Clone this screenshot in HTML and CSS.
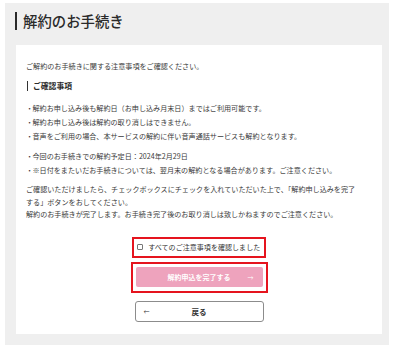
FILE: index.html
```html
<!DOCTYPE html>
<html lang="ja">
<head>
    <meta charset="utf-8">
    <meta name="viewport" content="width=device-width, initial-scale=1.0">
    <title>解約のお手続き</title>
    <link rel="stylesheet" href="styles.css">
</head>
<body>
    <div class="side">
        <h1 class="titel">解約のお手続き</h1>

        <section class="kort">
            <p class="intro">ご解約のお手続きに関する注意事項をご確認ください。</p>

            <h2 class="underTitel">ご確認事項</h2>

            <ul class="liste">
                <li>解約お申し込み後も解約日（お申し込み月末日）まではご利用可能です。</li>
                <li>解約お申し込み後は解約の取り消しはできません。</li>
                <li>音声をご利用の場合、本サービスの解約に伴い音声通話サービスも解約となります。</li>
            </ul>

            <ul class="liste">
                <li>今回のお手続きでの解約予定日：2024年2月29日</li>
                <li>※日付をまたいだお手続きについては、翌月末の解約となる場合があります。ご注意ください。</li>
            </ul>

            <p class="tekst">ご確認いただけましたら、チェックボックスにチェックを入れていただいた上で、「解約申し込みを完了する」ボタンをおしてください。<br>解約のお手続きが完了します。お手続き完了後のお取り消しは致しかねますのでご注意ください。</p>

            <div class="knapper">
                <label class="markering tjek">
                    <span class="boks"></span>
                    <span>すべてのご注意事項を確認しました</span>
                </label>
                <div class="markering">
                    <button class="fuldfoer">
                        <span>解約申込を完了する</span>
                        <span class="pil">→</span>
                    </button>
                </div>
                <button class="tilbage">
                    <span class="pil">←</span>
                    <span>戻る</span>
                </button>
            </div>
        </section>
    </div>
</body>
</html>
```

FILE: styles.css
```css
body {
    margin: 0;
    background-color: white;
    font-family: "Noto Sans CJK JP", "Noto Sans", sans-serif;
    color: #3a3a3a;
}

.side {
    margin: 3px 8px 4px 5px;
    padding: 9px 7px 11px 10px;
    background-color: #efefef;
}

.titel {
    margin: 0 0 15px 0;
    padding-left: 6px;
    border-left: 2px solid #2a2a2a;
    font-size: 14.4px;
    font-weight: 500;
    line-height: 18px;
    color: #2a2a2a;
}

.kort {
    margin-left: 1px;
    background-color: white;
    padding: 15px 26px 12px 10px;
    font-size: 7.1px;
    line-height: 12px;
}

.intro {
    margin: 0 0 9px 0;
}

.underTitel {
    margin: 0 0 10px 1px;
    padding-left: 5px;
    border-left: 1.5px solid #333;
    font-size: 7.8px;
    font-weight: 700;
    line-height: 10px;
    color: #2a2a2a;
}

.liste {
    margin: 0 0 6px 0;
    padding: 0;
    list-style: none;
}

.liste li {
    line-height: 14px;
}

.liste li::before {
    content: "・";
    display: inline-block;
    width: 6px;
    margin-right: 0.5px;
}

.tekst {
    margin: 5px 0 0 0;
    line-height: 12.5px;
}

.knapper {
    display: flex;
    flex-direction: column;
    align-items: center;
    gap: 4px;
    margin: 16px 0 0 16px;
}

.markering {
    border: 2.5px solid #e5141e;
    padding: 3.5px 3px;
}

.tjek {
    display: flex;
    align-items: center;
    gap: 5px;
    height: 10px;
    padding: 3.5px 4px 3.5px 3.5px;
    white-space: nowrap;
    font-size: 7px;
    letter-spacing: 0.05px;
    color: #333;
}

.boks {
    width: 4px;
    height: 4px;
    border: 0.8px solid #777;
    border-radius: 1px;
}

.fuldfoer {
    display: flex;
    justify-content: center;
    align-items: center;
    position: relative;
    width: 127px;
    height: 20px;
    border: none;
    border-radius: 2px;
    background-color: #eea3bd;
    color: white;
    font-family: inherit;
    font-size: 7px;
    font-weight: 700;
}

.fuldfoer .pil {
    position: absolute;
    right: 9px;
    font-size: 6px;
    font-weight: 400;
}

.tilbage {
    display: flex;
    justify-content: center;
    align-items: center;
    position: relative;
    width: 129px;
    height: 21px;
    margin-top: 4px;
    border: 1.5px solid #8c8c8c;
    border-radius: 3px;
    background-color: white;
    color: #333;
    font-family: inherit;
    font-size: 7.5px;
    font-weight: 700;
}

.tilbage .pil {
    position: absolute;
    left: 8px;
    font-size: 6px;
    font-weight: 400;
}
```
